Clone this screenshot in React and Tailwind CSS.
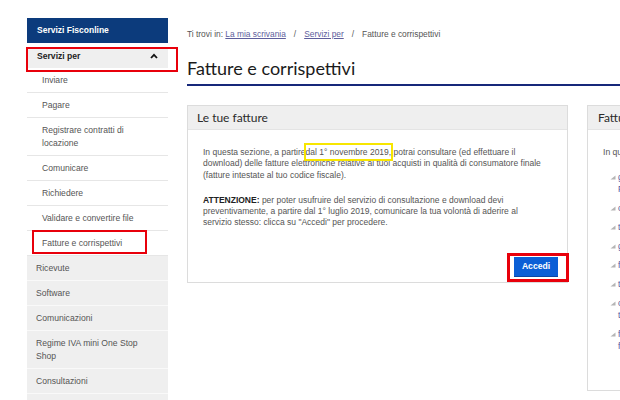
import React from "react";

function SubItem({ children, boxed }) {
  return (
    <div className="relative border-b border-[#e6e6e6] pl-[15px] pr-[8px] pt-[6px] pb-[5px] leading-[13px]">
      {children}
      {boxed && (
        <div className="absolute left-[5px] top-[-1px] w-[115px] h-[24px] border-2 border-[#e8000b]" />
      )}
    </div>
  );
}

function GrayItem({ children }) {
  return (
    <div className="border-b border-[#f9f9f9] pl-[9px] pr-[8px] pt-[6px] pb-[5px] leading-[13px]">
      {children}
    </div>
  );
}

function Bullet() {
  return (
    <svg width="6" height="5" viewBox="0 0 6 5" className="shrink-0 mt-[4px]">
      <path d="M0.5 4.5 L5.5 0.5 L5.5 4.5 Z" fill="#b5b5b5" />
    </svg>
  );
}

export default function App() {
  const list = [
    ["gestire le tue fatture", "Pagare e scaricare"],
    ["consultare le fatture"],
    ["trasmettere i file"],
    ["generare il QR code"],
    ["fatture emesse"],
    ["trasmissioni"],
    ["corrispettivi giornalieri", "telematici"],
    ["fatture elettroniche", "fornitori"],
  ];
  return (
    <div className="w-[620px] h-[400px] overflow-hidden bg-white flex items-start pt-[18px] pl-[27px] gap-[19px] font-['Liberation_Sans',Arial,sans-serif] text-[#555] text-[8.6px]">
      <aside className="w-[141px] shrink-0 flex flex-col">
        <div className="h-[25px] bg-[#0c3b7c] text-white font-bold text-[8.5px] flex items-center pl-[10px]">
          Servizi Fisconline
        </div>
        <div className="relative mt-[6px] h-[19px] bg-[#efefef] flex items-start justify-between pl-[10px] pr-[10px] pt-[1px] leading-[12px] font-bold text-[#222]">
          <span>Servizi per</span>
          <svg width="8" height="6" viewBox="0 0 8 6" className="mt-[3px]">
            <path d="M1 5 L4 1.8 L7 5" fill="none" stroke="#111" strokeWidth="1.8" />
          </svg>
          <div className="absolute left-[-1px] top-[-2px] w-[152px] h-[25px] border-2 border-[#e8000b]" />
        </div>
        <SubItem>Inviare</SubItem>
        <SubItem>Pagare</SubItem>
        <SubItem>
          Registrare contratti di
          <br />
          locazione
        </SubItem>
        <SubItem>Comunicare</SubItem>
        <SubItem>Richiedere</SubItem>
        <SubItem>Validare e convertire file</SubItem>
        <SubItem boxed>Fatture e corrispettivi</SubItem>
        <div className="bg-[#efefef]">
          <GrayItem>Ricevute</GrayItem>
          <GrayItem>Software</GrayItem>
          <GrayItem>Comunicazioni</GrayItem>
          <GrayItem>
            Regime IVA mini One Stop
            <br />
            Shop
          </GrayItem>
          <GrayItem>Consultazioni</GrayItem>
          <GrayItem>Altri servizi</GrayItem>
        </div>
      </aside>

      <main className="w-[640px] shrink-0 flex flex-col">
        <div className="mt-[10px] leading-[12px] text-[8.4px] text-[#555]">
          Ti trovi in:{" "}
          <span className="underline text-[#5e5e9c]">La mia scrivania</span>
          <span className="mx-[8px]">/</span>
          <span className="underline text-[#5e5e9c]">Servizi per</span>
          <span className="mx-[8px]">/</span>
          Fatture e corrispettivi
        </div>
        <h1 className="mt-[17px] font-['Lato',sans-serif] text-[18px] leading-[22px] text-[#1b1b1b] pb-[5px] border-b-2 border-[#16287a]">
          Fatture e corrispettivi
        </h1>
        <div className="mt-[19px] flex items-start gap-[19px]">
          <section className="w-[381px] shrink-0 h-[178px] border border-[#dcdcdc] flex flex-col">
            <div className="h-[24px] bg-[#efefef] border-b border-[#e4e4e4] flex items-center pl-[9px] font-['Lato',sans-serif] text-[12px] text-[#2a2a2a]">
              Le tue fatture
            </div>
            <div className="flex-1 flex flex-col pl-[15px] pt-[17px] text-[8.5px]">
              <p className="w-[340px] leading-[11.4px]">
                In questa sezione, a partire
                <span className="outline-2 outline-[#f7e600] py-[2px]">dal 1° novembre 2019,</span>
                {" "}potrai consultare (ed effettuare il download) delle fatture elettroniche relative ai tuoi acquisti in qualità di consumatore finale (fatture intestate al tuo codice fiscale).
              </p>
              <p className="w-[340px] leading-[10.8px] mt-[14px]">
                <b className="text-[#222]">ATTENZIONE:</b> per poter usufruire del servizio di consultazione e download devi preventivamente, a partire dal 1° luglio 2019, comunicare la tua volontà di aderire al servizio stesso: clicca su "Accedi" per procedere.
              </p>
              <div className="mt-auto self-end mr-[9px] mb-[5px] relative">
                <div className="w-[44px] h-[20px] bg-[#0b5fd6] border-b border-[#0a47a3] text-white font-bold text-[8.6px] flex items-center justify-center">
                  Accedi
                </div>
                <div className="absolute left-[-7px] top-[-4px] w-[62px] h-[29px] border-[3px] border-[#e8000b]" />
              </div>
            </div>
          </section>
          <section className="w-[300px] shrink-0 h-[286px] border border-[#dcdcdc] flex flex-col">
            <div className="h-[24px] bg-[#efefef] border-b border-[#e4e4e4] flex items-center pl-[10px] font-['Lato',sans-serif] text-[12px] text-[#2a2a2a]">
              Fatture e corrispettivi
            </div>
            <div className="pl-[15px] pt-[17px]">
              <p className="leading-[11px]">In questa sezione puoi:</p>
              <ul className="mt-[13px] pl-[7px] flex flex-col gap-[7px]">
                {list.map((l, i) => (
                  <li key={i} className="flex gap-[2px] leading-[12px]">
                    <Bullet />
                    <span className="text-[#55559a]">
                      {l[0]}
                      {l[1] && (
                        <>
                          <br />
                          {l[1]}
                        </>
                      )}
                    </span>
                  </li>
                ))}
              </ul>
            </div>
          </section>
        </div>
      </main>
    </div>
  );
}
